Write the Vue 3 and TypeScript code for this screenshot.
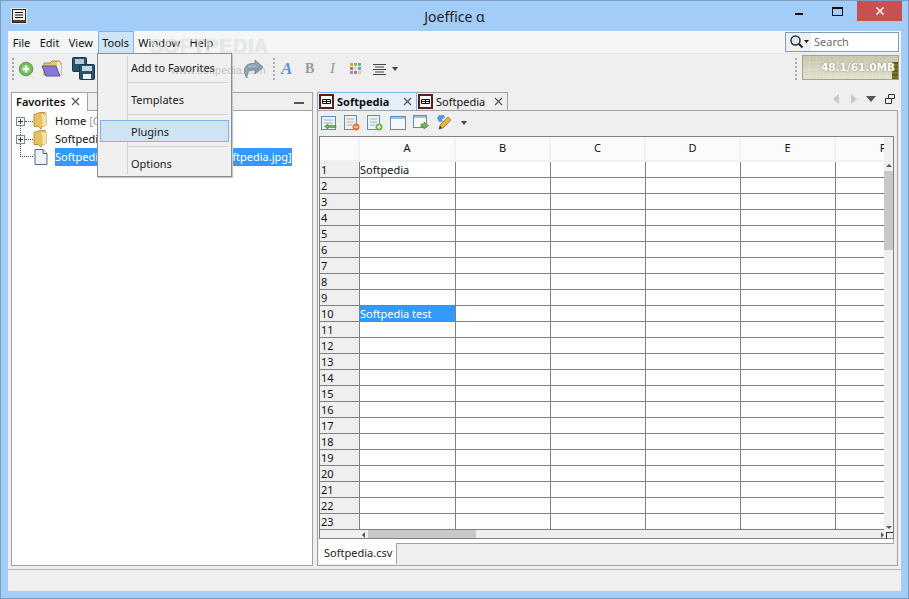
<script setup lang="ts">
const menus = ["File", "Edit", "View", "Tools", "Window", "Help"];
const dropdown = ["Add to Favorites", "Templates", "Plugins", "Options"];
const columns = ["A", "B", "C", "D", "E", "F"];
const rows = Array.from({ length: 23 }, (_, i) => i + 1);
const swatches = ["#e9a23b", "#8fc23f", "#4fb6a8", "#e35d5d", "#d4d4d4", "#5aa7e0", "#d96fc0", "#8f7fe0", "#e8d34f"];

function cellText(row: number, col: string) {
  if (col !== "A") return "";
  if (row === 1) return "Softpedia";
  if (row === 10) return "Softpedia test";
  return "";
}
</script>

<template>
  <div class="window">
    <header class="titlebar">
      <span class="app-icon">
        <svg width="14" height="14" viewBox="0 0 14 14">
          <rect x="0.5" y="0.5" width="13" height="13" fill="#f4f4ea" stroke="#2a2a2a" />
          <rect x="1" y="11" width="12" height="2" fill="#6b3a1e" />
          <path d="M3 3.500h8M3 6h8M3 8.500h8" stroke="#111" stroke-width="1.200" />
        </svg>
      </span>
      <span class="title">Joeffice α</span>
      <div class="caption">
        <span class="cap-btn"><i class="cap-min"></i></span>
        <span class="cap-btn"><i class="cap-max"></i></span>
        <span class="cap-close">
          <svg width="10" height="10" viewBox="0 0 10 10"><path d="M1.500 1.500l7 7M8.500 1.500l-7 7" stroke="#fff" stroke-width="1.600" /></svg>
        </span>
      </div>
    </header>

    <div class="client">
      <nav class="menubar">
        <span v-for="m in menus" :key="m" class="menu" :class="{ open: m === 'Tools' }">{{ m }}</span>
        <div class="search">
          <span class="search-btn">
            <svg width="20" height="16" viewBox="0 0 20 16">
              <circle cx="6.500" cy="6.500" r="4.500" fill="#dcebf7" stroke="#333" stroke-width="1.500" />
              <path d="M10 10l3.500 3.500" stroke="#222" stroke-width="2" />
              <path d="M15 6h5l-2.500 3z" fill="#111" />
            </svg>
          </span>
          <span class="search-text">Search</span>
        </div>
      </nav>

      <div class="toolbar">
        <i class="grip"></i>
        <svg class="t-add" width="16" height="16" viewBox="0 0 16 16">
          <circle cx="8" cy="8" r="6.800" fill="#72bd5a" stroke="#5c9c4a" />
          <circle cx="8" cy="8" r="4.200" fill="#8fd078" />
          <path d="M8 4.800v6.400M4.800 8h6.400" stroke="#fff" stroke-width="2" />
        </svg>
        <svg class="t-open" width="22" height="18" viewBox="0 0 22 18">
          <path d="M3 3h6l2-2h7l2 2v12H3z" fill="#e8c76a" stroke="#a98f4c" />
          <path d="M16 2h2l2 3v10h-3z" fill="#eef0f4" />
          <path d="M1 6h14l4 10H5z" fill="#8478d0" stroke="#5e54a8" />
        </svg>
        <svg class="t-save" width="23" height="23" viewBox="0 0 23 23">
          <rect x="0.500" y="0.500" width="14" height="14" rx="1" fill="#28536e" stroke="#17384e" />
          <rect x="3" y="2" width="9" height="5" fill="#b7c8d4" />
          <rect x="7.500" y="7.500" width="15" height="15" rx="1" fill="#28536e" stroke="#17384e" />
          <rect x="10" y="9" width="10" height="5" fill="#c5d4de" />
          <rect x="11" y="17" width="8" height="5" fill="#eef2f5" />
        </svg>
        <svg class="t-redo" width="22" height="20" viewBox="0 0 22 20">
          <path d="M5 19C1 14 1 5 10 4.500h3V1l8 7-8 7v-4h-3c-4 0-5 4-5 8z" fill="#8fa3ad" stroke="#7b929e" />
          <path d="M4 14c0-4 2-7 7-7h3" fill="none" stroke="#b9c7ce" />
        </svg>
        <i class="grip grip-b"></i>
        <b class="t-a">A</b>
        <b class="t-b">B</b>
        <em class="t-i">I</em>
        <span class="t-colors"><i v-for="c in swatches" :key="c" :style="{ background: c }"></i></span>
        <svg class="t-align" width="13" height="12" viewBox="0 0 13 12">
          <path d="M0 1.500h13M2 4h9M0 6.500h13M2 9h9M0 11.500h13" stroke="#444" />
        </svg>
        <i class="caret t-caret"></i>
        <i class="grip grip-c"></i>
        <div class="memory">
          <span class="memory-fill"></span>
          <span class="memory-text">48.1/61.0MB</span>
        </div>
      </div>

      <main class="workspace">
        <section class="favorites">
          <div class="pane-tabs">
            <div class="fav-tab">
              Favorites
              <svg class="x" width="9" height="9" viewBox="0 0 9 9"><path d="M1 1l7 7M8 1l-7 7" stroke="#555" stroke-width="1.200" /></svg>
            </div>
            <i class="minimize"></i>
          </div>
          <div class="tree">
            <div class="tree-row">
              <i class="expander"></i>
              <svg class="folder" width="16" height="18" viewBox="0 0 16 18">
                <path d="M1 2.500L7 .5h5l1 2v11l-4 1-1 2.500-3-2.500H1z" fill="#e9bf63" stroke="#b8923f" />
                <path d="M8 2.500c2 4 2 8 1 12l4-1v-11z" fill="#f6e2ae" />
              </svg>
              <span>Home <span class="dim">[C:\Users\Softpedia]</span></span>
            </div>
            <div class="tree-row">
              <i class="expander last"></i>
              <svg class="folder" width="16" height="18" viewBox="0 0 16 18">
                <path d="M1 2.500L7 .5h5l1 2v11l-4 1-1 2.500-3-2.500H1z" fill="#e9bf63" stroke="#b8923f" />
                <path d="M8 2.500c2 4 2 8 1 12l4-1v-11z" fill="#f6e2ae" />
              </svg>
              <span>Softpedia <span class="dim">[C:\Softpedia]</span></span>
            </div>
            <div class="tree-row">
              <i class="elbow"></i>
              <svg class="file" width="14" height="16" viewBox="0 0 14 16"><path d="M1 .5h8l4 4v11H1z" fill="#eef2f6" stroke="#5d6b78" /><path d="M9 .5v4h4" fill="#d9dfe5" stroke="#5d6b78" /></svg>
              <span class="selected">Softpedia test.jpg [C:\Softpedia\Softpedia.jpg]</span>
            </div>
          </div>
        </section>

        <section class="editor">
          <div class="editor-tabs">
            <div class="doc-tab active">
              <svg class="sheet-ico" width="15" height="15" viewBox="0 0 15 15"><rect x="1" y="1" width="13" height="13" fill="#fff" stroke="#5c1f1f" stroke-width="2" /><path d="M3.500 5.500h8v4h-8zM3.500 7.500h8M7.500 5.500v4" fill="none" stroke="#111" /></svg>
              <span>Softpedia</span>
              <svg class="x" width="9" height="9" viewBox="0 0 9 9"><path d="M1 1l7 7M8 1l-7 7" stroke="#555" stroke-width="1.200" /></svg>
            </div>
            <div class="doc-tab">
              <svg class="sheet-ico" width="15" height="15" viewBox="0 0 15 15"><rect x="1" y="1" width="13" height="13" fill="#fff" stroke="#5c1f1f" stroke-width="2" /><path d="M3.500 5.500h8v4h-8zM3.500 7.500h8M7.500 5.500v4" fill="none" stroke="#111" /></svg>
              <span>Softpedia</span>
              <svg class="x" width="9" height="9" viewBox="0 0 9 9"><path d="M1 1l7 7M8 1l-7 7" stroke="#555" stroke-width="1.200" /></svg>
            </div>
            <div class="tab-controls">
              <i class="arrow-left"></i>
              <i class="arrow-right"></i>
              <i class="caret big"></i>
              <svg width="10" height="10" viewBox="0 0 10 10"><path d="M3.500.5h6v4h-6zM.5 4.500h6v5h-6z" fill="#efefef" stroke="#333" /></svg>
            </div>
          </div>

          <div class="editor-body">
            <div class="sheet-tools">
              <svg width="16" height="14" viewBox="0 0 16 14"><rect x="0.500" y="0.500" width="14" height="13" fill="#eaf2fa" stroke="#5f8fb8" /><path d="M3 4h9M3 7h9" stroke="#9bb6cc" /><path d="M15 9.500H7V8L3.500 10.500 7 13v-1.500h8z" fill="#6fb04f" stroke="#3f7a2c" stroke-width=".5" /></svg>
              <svg width="16" height="16" viewBox="0 0 16 16"><rect x="0.500" y="0.500" width="12" height="14" fill="#eaf2fa" stroke="#5f8fb8" /><path d="M3 4h7M3 7h7M3 10h5" stroke="#d9a58a" /><circle cx="12" cy="12" r="3.500" fill="#e4772d" /><path d="M10 12h4" stroke="#fff" /></svg>
              <svg width="16" height="16" viewBox="0 0 16 16"><rect x="0.500" y="0.500" width="12" height="14" fill="#eaf2fa" stroke="#5f8fb8" /><path d="M3 4h7M3 7h7M3 10h5" stroke="#9bb6cc" /><circle cx="12" cy="12" r="3.500" fill="#6fb04f" /><path d="M10 12h4M12 10v4" stroke="#fff" /></svg>
              <svg width="16" height="14" viewBox="0 0 16 14"><rect x="0.500" y="0.500" width="15" height="13" fill="#f6f8fa" stroke="#5f8fb8" /><rect x="1" y="1" width="14" height="2" fill="#9dc3e2" /></svg>
              <svg width="16" height="16" viewBox="0 0 16 16"><rect x="0.500" y="0.500" width="13" height="12" fill="#f6f8fa" stroke="#5f8fb8" /><rect x="1" y="1" width="12" height="2" fill="#9dc3e2" /><path d="M8 9h3V7l4.500 3.500L11 14v-2H8z" fill="#7cb45a" stroke="#4b8031" stroke-width=".6" /></svg>
              <svg width="18" height="17" viewBox="0 0 18 17"><path d="M3 1h5l1 3-3 1 1 3H3L1 4z" fill="#5f9bd6" /><path d="M3 15l1-4 8-8 3 3-8 8z" fill="#e8b23d" stroke="#8a6a22" stroke-width=".7" /><path d="M3 15l1-3 2 2z" fill="#333" /></svg>
              <i class="caret"></i>
            </div>

            <div class="sheet-frame">
              <div class="sheet-scroll">
                <div class="sheet-area">
                  <div class="sheet-grid">
                    <div class="corner"></div>
                    <div v-for="c in columns" :key="c" class="col-head">{{ c }}</div>
                    <template v-for="r in rows" :key="r">
                      <div class="row-head">{{ r }}</div>
                      <div
                        v-for="c in columns"
                        :key="c"
                        class="cell"
                        :class="{ picked: r === 10 && c === 'A' }"
                      >{{ cellText(r, c) }}</div>
                    </template>
                  </div>
                </div>
                <div class="v-scroll">
                  <i class="up"></i>
                  <span class="v-thumb"></span>
                  <i class="down"></i>
                </div>
              </div>
              <div class="h-scroll">
                <i class="left"></i>
                <span class="h-thumb"></span>
                <i class="right"></i>
                <i class="resize"></i>
              </div>
            </div>
            <div class="sheet-strip"></div>
            <div class="sheet-tabs">
              <span class="sheet-tab">Softpedia.csv</span>
            </div>
          </div>
        </section>
      </main>

      <footer class="statusbar"></footer>

      <!-- open Tools menu -->
      <div class="dropdown">
        <div
          v-for="(item, i) in dropdown"
          :key="item"
          class="drop-item"
          :class="{ hover: item === 'Plugins', ruled: i > 0 }"
        >
          <span>{{ item }}</span>
        </div>
      </div>

      <!-- watermark of the screenshot site -->
      <div class="wm wm-big">SOFTPEDIA</div>
      <div class="wm wm-small">www.softpedia.com</div>
    </div>
  </div>
</template>

<style scoped>
.window {
  box-sizing: border-box;
  width: 909px;
  height: 599px;
  display: flex;
  flex-direction: column;
  padding: 0 7px 7px 7px;
  background: #a3cdf9;
  border: 1px solid #7d9cbe;
  font-family: "Noto Sans", "DejaVu Sans", sans-serif;
  font-size: 11px;
  color: #111;
  overflow: hidden;
}
.titlebar {
  position: relative;
  flex: none;
  height: 30px;
  display: flex;
  align-items: center;
}
.app-icon {
  display: flex;
  padding: 1px 1px;
  margin: -1px 0 0 3px;
  background: #dfeedd;
}
.title {
  position: absolute;
  left: 0;
  right: 0;
  text-align: center;
  font-size: 14px;
  color: #1c1c1c;
}
.caption {
  margin-left: auto;
  margin-right: -1px;
  align-self: flex-start;
  display: flex;
  height: 20px;
}
.cap-btn {
  width: 39px;
  display: flex;
  align-items: center;
  justify-content: center;
}
.cap-min {
  width: 8px;
  height: 2px;
  margin-top: 6px;
  background: #111;
}
.cap-max {
  box-sizing: border-box;
  width: 11px;
  height: 9px;
  border: 1px solid #111;
  border-top-width: 2px;
}
.cap-close {
  width: 45px;
  display: flex;
  align-items: center;
  justify-content: center;
  background: #c75050;
}
.client {
  position: relative;
  flex: 1;
  display: flex;
  flex-direction: column;
  background: #efefef;
  min-height: 0;
}
.menubar {
  flex: none;
  height: 22px;
  display: flex;
  align-items: center;
  background: #f5f6f7;
}
.menu {
  box-sizing: border-box;
  height: 22px;
  line-height: 21px;
  padding: 0 3.7px;
  white-space: nowrap;
  border: 1px solid transparent;
}
.menu.open {
  background: #cfe3f6;
  border-color: #7eb4ea;
  border-bottom: 0;
}
.search {
  box-sizing: border-box;
  width: 114px;
  height: 20px;
  margin-left: auto;
  margin-right: 2px;
  display: flex;
  border: 1px solid #7f9db9;
  background: #fff;
}
.search-btn {
  width: 25px;
  display: flex;
  align-items: center;
  justify-content: center;
  background: #f0f0f0;
}
.search-text {
  margin-left: 3px;
  line-height: 17px;
  color: #6d6d6d;
}
.toolbar {
  flex: none;
  height: 30px;
  display: flex;
  align-items: center;
  border-top: 1px solid #e6e6e6;
  box-sizing: border-box;
}
.grip {
  width: 2px;
  height: 22px;
  margin-left: 4px;
  background: repeating-linear-gradient(#a9a9a9 0 2px, transparent 2px 4px);
}
.t-add { margin-left: 4px; }
.t-open { margin-left: 7px; }
.t-save { margin-left: 9px; }
.t-redo { margin-left: 147px; }
.grip-b { margin-left: 9px; }
.t-a {
  width: 12px;
  margin-left: 6px;
  font: italic bold 17px "Liberation Serif", serif;
  color: #5f93d8;
}
.t-b {
  width: 10px;
  margin-left: 12px;
  font: bold 14px "Liberation Serif", serif;
  color: #9a9a9a;
}
.t-i {
  width: 8px;
  margin-left: 15px;
  font: italic 15px "Liberation Serif", serif;
  color: #9a9a9a;
}
.t-colors {
  margin-left: 12px;
  width: 12px;
  display: grid;
  grid-template-columns: repeat(3, 3px);
  grid-auto-rows: 3px;
  gap: 1px;
}
.t-align { margin-left: 11px; }
.caret {
  width: 0;
  height: 0;
  border: 3px solid transparent;
  border-top: 4px solid #444;
  border-bottom: 0;
}
.t-caret { margin-left: 6px; }
.grip-c { margin-left: 397px; }
.memory {
  position: relative;
  box-sizing: border-box;
  width: 97px;
  height: 25px;
  margin: -3px 0 0 5px;
  border: 1px solid #a6a38a;
  background:
    repeating-linear-gradient(90deg, transparent 0 6px, rgba(255, 255, 255, 0.12) 6px 7px),
    repeating-linear-gradient(transparent 0 6px, rgba(255, 255, 255, 0.12) 6px 7px),
    linear-gradient(#c9c6ae, #e2e0cd);
  overflow: hidden;
}
.memory-fill {
  position: absolute;
  right: 0;
  bottom: 0;
  width: 6px;
  height: 17px;
  background: repeating-linear-gradient(#5f5b1e 0 2px, #7a762e 2px 4px);
}
.memory-text {
  position: absolute;
  right: 3px;
  top: 5px;
  color: #fff;
  font: 700 10.5px "DejaVu Sans", sans-serif;
  text-shadow: 0 0 2px #77745c;
}
.workspace {
  flex: 1;
  min-height: 0;
  display: flex;
  gap: 4px;
  padding: 9px 3px 3px 3px;
}
.favorites {
  box-sizing: border-box;
  width: 302px;
  display: flex;
  flex-direction: column;
  border: 1px solid #a2a2a2;
  border-top: 0;
  background: #fff;
}
.pane-tabs {
  flex: none;
  height: 19px;
  display: flex;
  align-items: flex-end;
  background: #efefef;
  border-top: 1px solid #a2a2a2;
  border-bottom: 1px solid #a2a2a2;
  box-sizing: border-box;
}
.fav-tab {
  box-sizing: border-box;
  width: 76px;
  height: 18px;
  margin-bottom: -1px;
  padding: 0 0 2px 4px;
  display: flex;
  align-items: center;
  gap: 6px;
  background: #fff;
  border-right: 1px solid #a2a2a2;
  font-weight: 600;
}
.minimize {
  width: 10px;
  height: 2px;
  margin: 0 8px 6px auto;
  background: #555;
}
.tree {
  padding-top: 1px;
}
.tree-row {
  position: relative;
  height: 18px;
  display: flex;
  align-items: flex-start;
  padding-left: 43px;
  line-height: 17px;
  white-space: nowrap;
}
.expander {
  position: absolute;
  left: 4px;
  top: 5px;
  width: 7px;
  height: 7px;
  border: 1px solid #7e8ca0;
  background:
    linear-gradient(#2a3f6f, #2a3f6f) center / 5px 1px no-repeat,
    linear-gradient(#2a3f6f, #2a3f6f) center / 1px 5px no-repeat,
    #f4f4f4;
}
.expander::after {
  content: "";
  position: absolute;
  left: 8px;
  top: 3px;
  width: 8px;
  border-top: 1px dotted #555;
}
.expander::before {
  content: "";
  position: absolute;
  left: 3px;
  top: 8px;
  height: 9px;
  border-left: 1px dotted #555;
}
.expander.last::before {
  display: none;
}
.elbow {
  position: absolute;
  left: 8px;
  top: -4px;
  width: 12px;
  height: 12px;
  border-left: 1px dotted #444;
  border-bottom: 1px dotted #444;
}
.folder {
  position: absolute;
  left: 21px;
  top: 0;
}
.file {
  position: absolute;
  left: 22px;
  top: 1px;
}
.dim { color: #9a9a9a; }
.selected {
  height: 18px;
  background: #3399ff;
  color: #fff;
}
.editor {
  flex: 1;
  min-width: 0;
  display: flex;
  flex-direction: column;
}
.editor-tabs {
  flex: none;
  height: 18px;
  display: flex;
  align-items: flex-end;
}
.doc-tab {
  box-sizing: border-box;
  width: 91px;
  height: 18px;
  padding: 0 4px 0 1px;
  display: flex;
  align-items: center;
  gap: 3px;
  background: #efefef;
  border: 1px solid #a2a2a2;
  border-bottom: 0;
  border-left: 0;
}
.doc-tab.active {
  width: 100px;
  background: #e4effa;
  border-left: 1px solid #7eb4ea;
  border-top-color: #7eb4ea;
  border-right-color: #7eb4ea;
  font-weight: 700;
}
.doc-tab .x {
  margin-left: auto;
}
.tab-controls {
  margin-left: auto;
  display: flex;
  align-items: center;
  gap: 9px;
  padding: 0 3px 6px 0;
}
.arrow-left, .arrow-right {
  width: 0;
  height: 0;
  border: 5px solid transparent;
}
.arrow-left {
  margin-right: 3px;
  border-left: 0;
  border-right: 6px solid #c8c8c8;
}
.arrow-right {
  border-right: 0;
  border-left: 6px solid #c8c8c8;
}
.caret.big {
  border-width: 5px;
  border-top-width: 6px;
  border-top-color: #555;
  border-bottom: 0;
}
.editor-body {
  flex: 1;
  min-height: 0;
  display: flex;
  flex-direction: column;
  border: 1px solid #a2a2a2;
  padding: 0 3px 0 1px;
}
.sheet-tools {
  flex: none;
  box-sizing: border-box;
  height: 25px;
  display: flex;
  align-items: center;
  gap: 7px;
  padding: 0 0 2px 2px;
}
.sheet-frame {
  flex: 1;
  min-height: 0;
  display: flex;
  flex-direction: column;
  border: 1px solid #808080;
}
.sheet-scroll {
  flex: 1;
  min-height: 0;
  display: flex;
}
.sheet-area {
  flex: 1;
  min-width: 0;
  overflow: hidden;
  background: #fff;
}
.sheet-grid {
  display: grid;
  grid-template-columns: 40px 96px repeat(5, 95px);
  grid-auto-rows: 16px;
  grid-template-rows: 25px;
}
.corner, .col-head {
  box-sizing: border-box;
  height: 25px;
  background: #fbfbfb;
  border-right: 2px solid #eef3fa;
  border-bottom: 2px solid #eef3fa;
}
.col-head {
  line-height: 22px;
  text-align: center;
}
.row-head {
  box-sizing: border-box;
  padding-left: 1px;
  line-height: 15px;
  background: #efefef;
  border-right: 1px solid #808080;
  border-bottom: 1px solid #808080;
}
.cell {
  box-sizing: border-box;
  line-height: 15px;
  white-space: nowrap;
  overflow: hidden;
  border-right: 1px solid #808080;
  border-bottom: 1px solid #808080;
}
.cell.picked {
  background: #3399ff;
  color: #fff;
}
.v-scroll {
  position: relative;
  flex: none;
  width: 9px;
  background: #efefef;
}
.v-thumb {
  position: absolute;
  left: 0;
  right: 0;
  top: 34px;
  height: 79px;
  background: #c8c8c8;
}
.up, .down {
  position: absolute;
  left: 2px;
  width: 0;
  height: 0;
  border: 3px solid transparent;
}
.up {
  top: 27px;
  border-top: 0;
  border-bottom-color: #555;
}
.down {
  bottom: 1px;
  border-bottom: 0;
  border-top-color: #555;
}
.h-scroll {
  position: relative;
  flex: none;
  height: 8px;
  background: #efefef;
}
.h-thumb {
  position: absolute;
  left: 48px;
  width: 108px;
  top: 0;
  bottom: 0;
  background: #c8c8c8;
}
.left, .right {
  position: absolute;
  top: 2px;
  width: 0;
  height: 0;
  border: 3px solid transparent;
}
.left {
  left: 42px;
  border-left: 0;
  border-right-color: #555;
}
.right {
  right: 9px;
  border-right: 0;
  border-left-color: #555;
}
.resize {
  position: absolute;
  right: 0;
  top: 2px;
  width: 6px;
  height: 6px;
  border: 1px solid #333;
  border-right: 0;
  border-bottom: 0;
}
.sheet-strip {
  flex: none;
  height: 4px;
  background: #fff;
  border-bottom: 1px solid #a2a2a2;
  border-right: 1px solid #a2a2a2;
}
.sheet-tabs {
  flex: none;
  height: 21px;
  display: flex;
  align-items: stretch;
}
.sheet-tab {
  box-sizing: border-box;
  width: 78px;
  height: 21px;
  margin: -1px 0 0 0;
  padding-left: 5px;
  line-height: 20px;
  background: #fff;
  border-right: 1px solid #a2a2a2;
  color: #222;
}
.statusbar {
  flex: none;
  box-sizing: border-box;
  height: 22px;
  border-top: 1px solid #b5b5b5;
}
.dropdown {
  position: absolute;
  left: 89px;
  top: 22px;
  box-sizing: border-box;
  width: 135px;
  height: 124px;
  padding: 0 2px;
  background: #f0f0f0;
  border: 1px solid #8d8d8d;
  box-shadow: 1px 1px 1px #c9c9c9;
}
.dropdown::before {
  content: "";
  position: absolute;
  left: 29px;
  top: 2px;
  bottom: 2px;
  width: 1px;
  background: #d0d0d0;
}
.drop-item {
  box-sizing: border-box;
  position: relative;
  height: 32px;
  padding-left: 31px;
  display: flex;
  align-items: center;
  color: #1a1a1a;
}
.drop-item:first-child {
  margin-top: -3px;
}
.drop-item span {
  position: relative;
}
.drop-item.ruled::before {
  content: "";
  position: absolute;
  left: 27px;
  right: 1px;
  top: -1px;
  height: 1px;
  background: #d4d4d4;
}
.drop-item.hover::after {
  content: "";
  position: absolute;
  inset: 5px 0;
  z-index: 0;
  background: #cfe3f3;
  border: 1px solid #7eb4ea;
}
.drop-item.hover span {
  z-index: 1;
}
.wm {
  position: absolute;
  pointer-events: none;
  font-family: "Liberation Sans", sans-serif;
  white-space: nowrap;
}
.wm-big {
  left: 142px;
  top: 4px;
  font-size: 20px;
  font-weight: 700;
  letter-spacing: 0.5px;
  color: rgba(255, 255, 255, 0.55);
  text-shadow: 0 0 1px rgba(120, 120, 120, 0.35);
}
.wm-small {
  left: 163px;
  top: 33px;
  font-size: 11px;
  color: rgba(120, 120, 120, 0.4);
}
</style>

<style>
html, body {
  margin: 0;
  overflow: hidden;
}
</style>
